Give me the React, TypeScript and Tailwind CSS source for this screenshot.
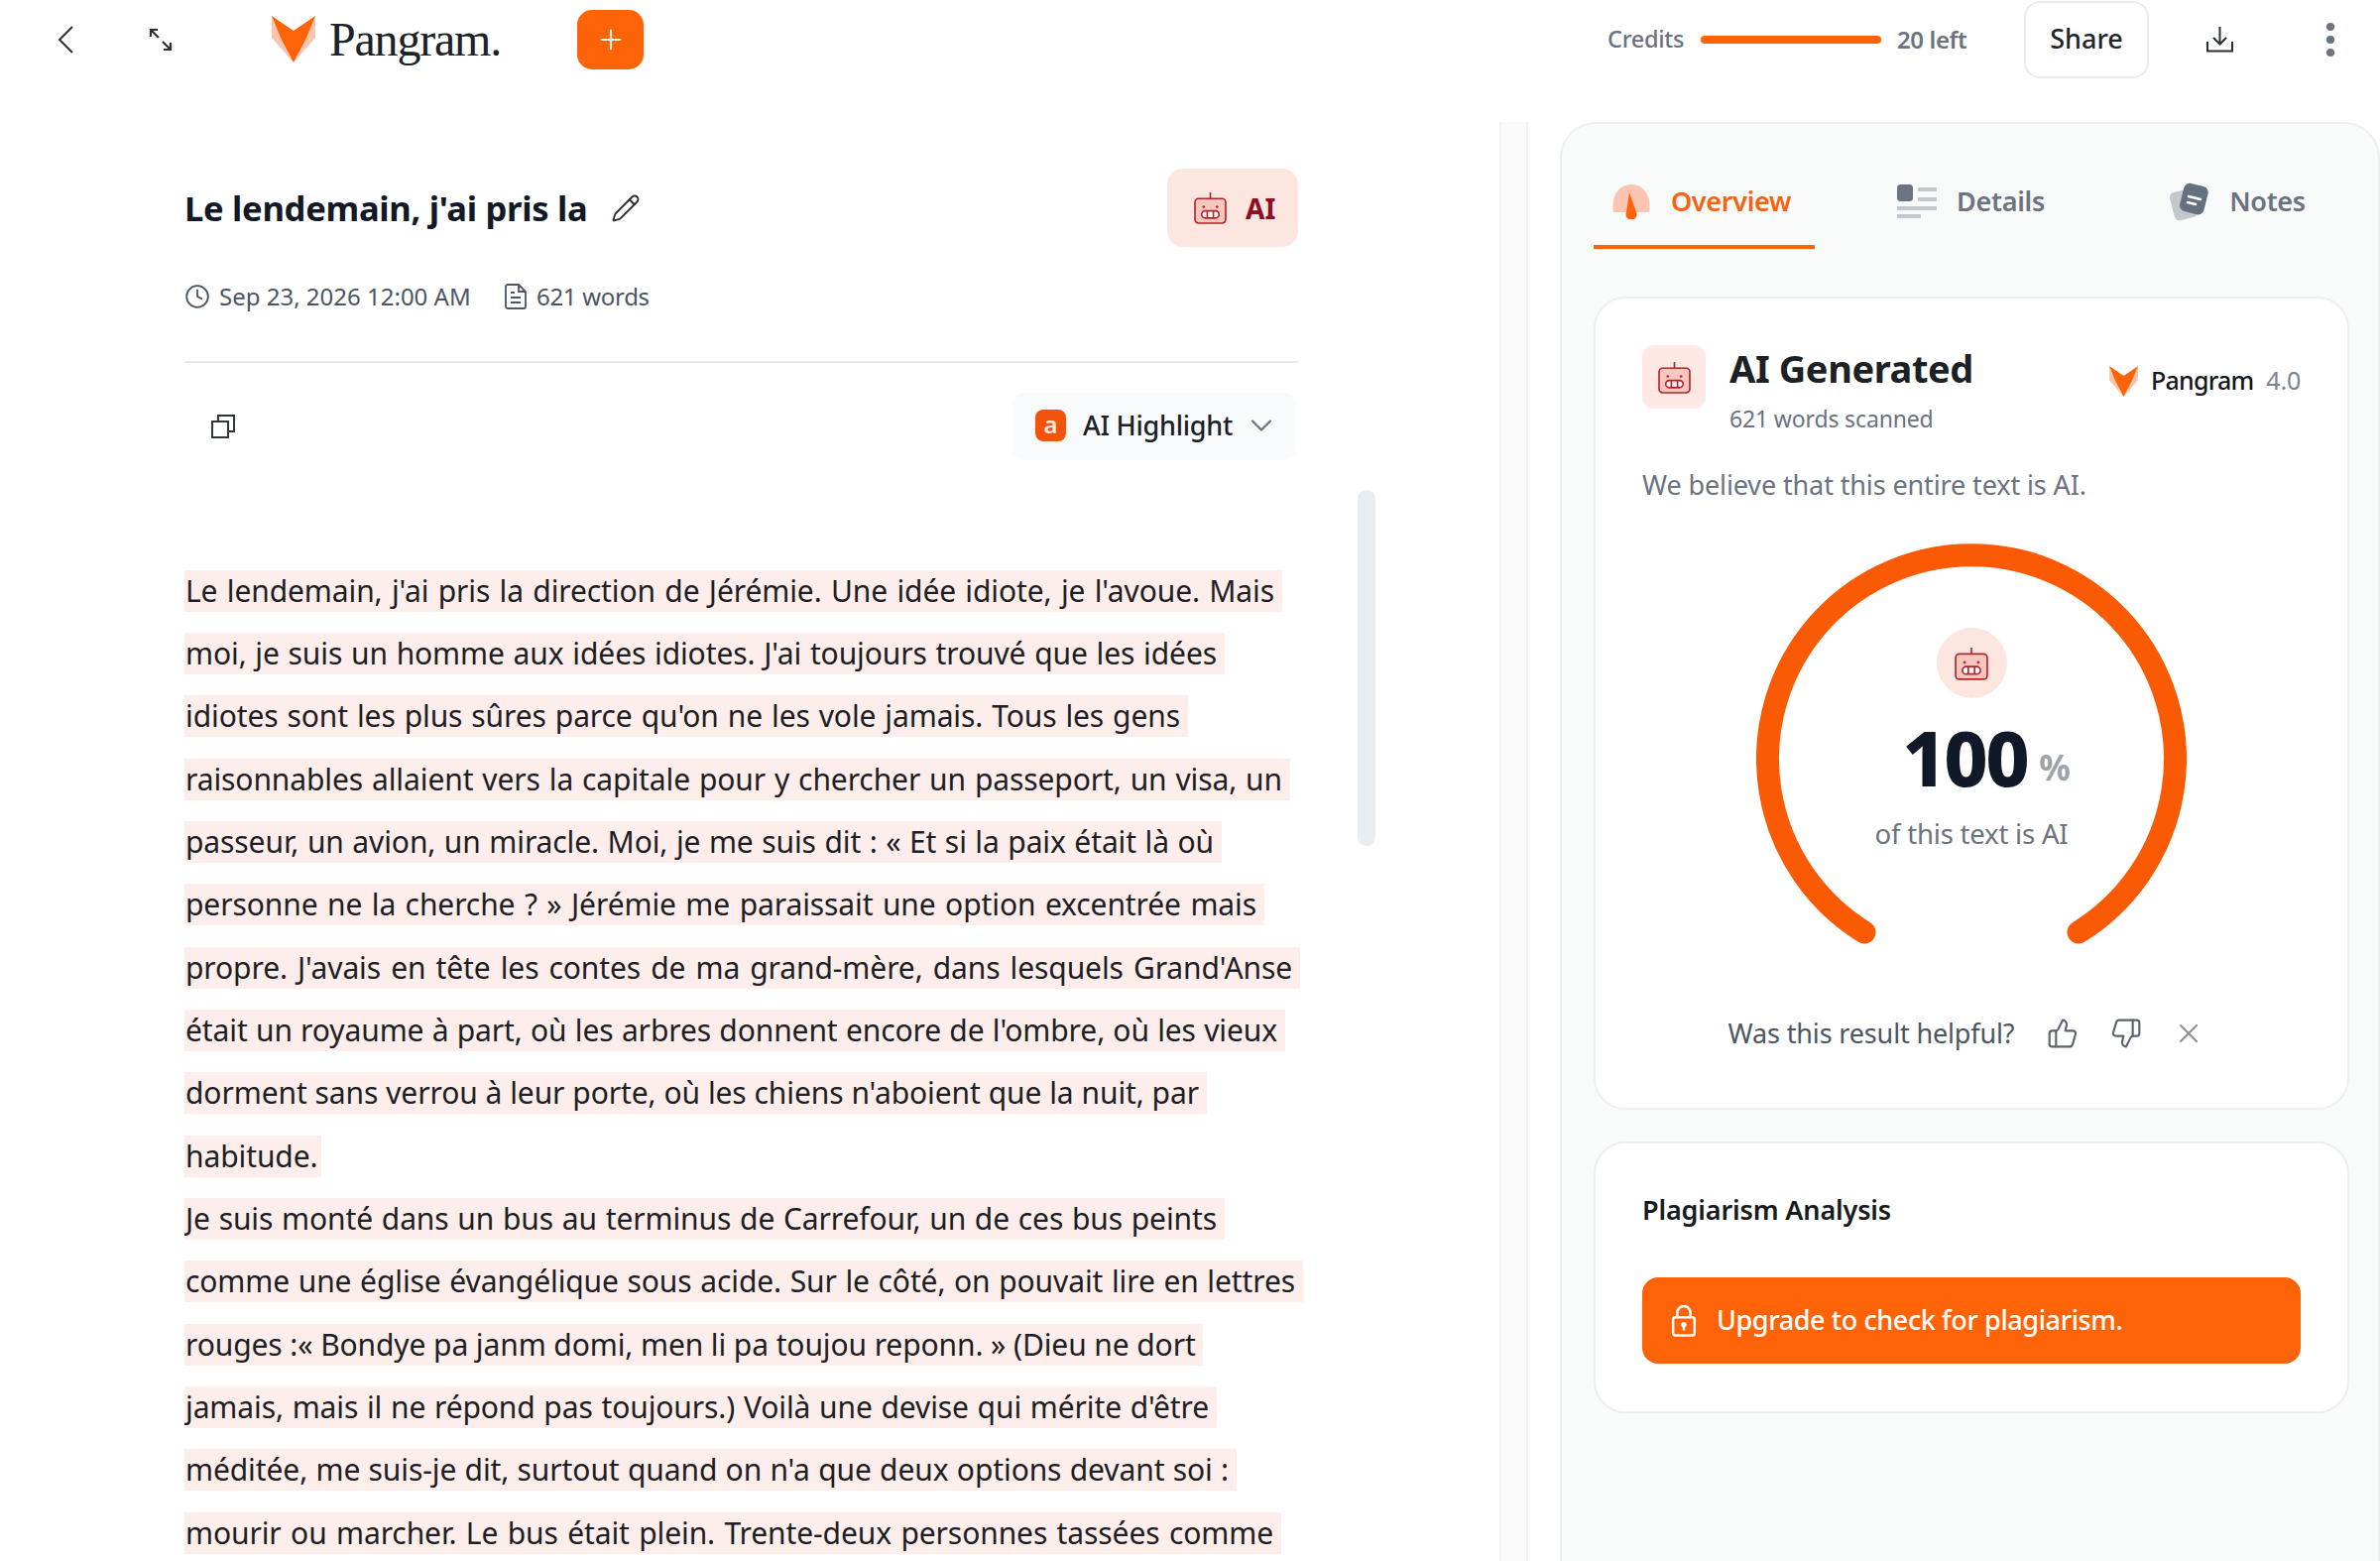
import React from "react";
import { Plus, Pencil, Clock, ChevronDown, ThumbsUp, ThumbsDown, X } from "lucide-react";

const LINES: [string, number][] = [
  ["Le lendemain, j'ai pris la direction de Jérémie. Une idée idiote, je l'avoue. Mais", 1107],
  ["moi, je suis un homme aux idées idiotes. J'ai toujours trouvé que les idées", 1049],
  ["idiotes sont les plus sûres parce qu'on ne les vole jamais. Tous les gens", 1012],
  ["raisonnables allaient vers la capitale pour y chercher un passeport, un visa, un", 1115],
  ["passeur, un avion, un miracle. Moi, je me suis dit : « Et si la paix était là où", 1046],
  ["personne ne la cherche ? » Jérémie me paraissait une option excentrée mais", 1089],
  ["propre. J'avais en tête les contes de ma grand-mère, dans lesquels Grand'Anse", 1125],
  ["était un royaume à part, où les arbres donnent encore de l'ombre, où les vieux", 1110],
  ["dorment sans verrou à leur porte, où les chiens n'aboient que la nuit, par", 1031],
  ["habitude.", 138],
  ["Je suis monté dans un bus au terminus de Carrefour, un de ces bus peints", 1049],
  ["comme une église évangélique sous acide. Sur le côté, on pouvait lire en lettres", 1128],
  ["rouges :« Bondye pa janm domi, men li pa toujou reponn. » (Dieu ne dort", 1027],
  ["jamais, mais il ne répond pas toujours.) Voilà une devise qui mérite d'être", 1041],
  ["méditée, me suis-je dit, surtout quand on n'a que deux options devant soi :", 1061],
  ["mourir ou marcher. Le bus était plein. Trente-deux personnes tassées comme", 1106],
];

function Fox({ className }: { className: string }) {
  return (
    <svg viewBox="0 0 44 47" className={className}>
      <polygon points="0,0 0,22 22,47 9,20" fill="#fcc5b2" />
      <polygon points="44,0 44,22 22,47 35,20" fill="#fcc5b2" />
      <polygon points="0,0 22,15 44,0 35,22 22,47 9,22" fill="#ff6308" />
    </svg>
  );
}

function Robot({ className }: { className: string }) {
  return (
    <svg viewBox="0 0 32 32" className={className} fill="none">
      <path d="M16 1v6" stroke="#b4232a" strokeWidth="1.6" />
      <rect x="1" y="7" width="30" height="24" rx="3.5" fill="#f9c7bd" stroke="#b4232a" strokeWidth="1.6" />
      <circle cx="9.5" cy="15" r="1.3" fill="#b4232a" />
      <circle cx="22.5" cy="15" r="1.3" fill="#b4232a" />
      <rect x="7.5" y="19" width="17" height="7" rx="3.5" fill="#fff" stroke="#b4232a" strokeWidth="1.6" />
      <path d="M13 19v7M19 19v7" stroke="#b4232a" strokeWidth="1.6" />
    </svg>
  );
}

export default function App() {
  return (
    <div className="w-[2400px] h-[1574px] overflow-hidden bg-white font-['Noto_Sans',sans-serif] text-[#1f2328]">
      <header className="h-[123px] flex items-start">
        <div className="h-[79px] w-full flex items-center">
          <svg viewBox="0 0 16 28" className="ml-[58px] w-[16px] h-[28px]" fill="none" stroke="#2b2f36" strokeWidth="2">
            <path d="M15 1L2 14l13 13" />
          </svg>
          <svg viewBox="0 0 24 24" className="ml-[76px] w-[24px] h-[24px] text-[#2b2f36]" fill="none" stroke="currentColor" strokeWidth="2.2">
            <path d="M2 9V2h7M2 2l8 8M22 15v7h-7M22 22l-8-8" />
          </svg>
          <Fox className="ml-[100px] w-[44px] h-[47px]" />
          <span className="ml-[14px] font-['Liberation_Serif',serif] text-[48px] leading-none tracking-[-1.2px] text-[#1c2226]">Pangram.</span>
          <div className="ml-[77px] w-[67px] h-[60px] rounded-[15px] bg-[#ff6308] flex items-center justify-center">
            <Plus className="w-[32px] h-[32px] text-white" strokeWidth={1.6} />
          </div>
          <span className="ml-[972px] w-[78px] text-[23.500px] tracking-[-0.3px] font-medium text-[#6b7280] whitespace-nowrap">Credits</span>
          <div className="ml-[16px] w-[182px] h-[8px] rounded-full bg-[#ff6308]" />
          <span className="ml-[16px] w-[71px] text-[24px] tracking-[-0.4px] font-semibold text-[#6b7280] whitespace-nowrap">20 left</span>
          <button className="ml-[57px] w-[126px] h-[78px] rounded-[16px] border-2 border-[#e9ebee] text-[27px] font-medium text-[#22262b]">Share</button>
          <svg viewBox="0 0 27 27" className="ml-[58px] w-[27px] h-[27px]" fill="none" stroke="#2b2f36" strokeWidth="2">
            <path d="M1 16v9.500h25V16M13.500 1v17M7 12l6.500 6.500L20 12" />
          </svg>
          <div className="ml-[94px] flex flex-col gap-[5px]">
            <span className="w-[8px] h-[8px] rounded-full bg-[#6b7280]" />
            <span className="w-[8px] h-[8px] rounded-full bg-[#6b7280]" />
            <span className="w-[8px] h-[8px] rounded-full bg-[#6b7280]" />
          </div>
        </div>
      </header>

      <div className="flex h-[1451px]">
        <main className="relative w-[1512px] pl-[186px] pt-[47px]">
          <div className="w-[1123px]">
            <div className="h-[79px] flex items-center">
              <h1 className="text-[34.600px] font-bold text-[#111827] tracking-[-0.3px] whitespace-nowrap">Le lendemain, j'ai pris la</h1>
              <Pencil className="ml-[24px] w-[30px] h-[30px] text-[#2b2f36]" strokeWidth={1.5} />
              <div className="ml-auto w-[132px] h-[79px] rounded-[16px] bg-[#fde5e0] flex items-center pl-[27px] gap-[19px]">
                <Robot className="w-[33px] h-[33px]" />
                <span className="text-[28px] font-bold text-[#8a0f24]">AI</span>
              </div>
            </div>
            <div className="mt-[37px] h-[26px] flex items-center text-[24px] text-[#4b5563] whitespace-nowrap">
              <Clock className="w-[26px] h-[26px]" strokeWidth={1.7} />
              <span className="ml-[9px] w-[288px]">Sep 23, 2026 12:00 AM</span>
              <svg viewBox="0 0 22 26" className="w-[22px] h-[26px]" fill="none" stroke="#4b5563" strokeWidth="1.8">
                <path d="M3 1h11l7 7v15a2 2 0 0 1-2 2H3a2 2 0 0 1-2-2V3a2 2 0 0 1 2-2zM14 1v7h7M6 9h4M6 14h10M6 19h10" />
              </svg>
              <span className="ml-[10px] tracking-[-0.3px]">621 words</span>
            </div>
            <div className="mt-[52px] h-[2px] bg-[#e7e9ec]" />
            <div className="mt-[30px] h-[68px] flex items-center">
              <svg viewBox="0 0 24 24" className="ml-[27px] w-[24px] h-[24px]" fill="none" stroke="#2b2f36" strokeWidth="1.9">
                <path d="M7 7V1h16v16h-6" />
                <rect x="1" y="7" width="16" height="16" />
              </svg>
              <div className="ml-auto mr-[2px] w-[286px] h-[68px] rounded-[12px] bg-[#f9fafb] flex items-center pl-[23px] pb-[2px]">
                <div className="w-[31px] h-[32px] rounded-[8px] bg-[#f4530a] flex items-center justify-center text-[24px] font-semibold leading-none text-[#ffe9dd] pb-[3px]">a</div>
                <span className="ml-[17px] text-[27px] font-medium tracking-[-0.25px] text-[#1b2126] whitespace-nowrap">AI Highlight</span>
                <ChevronDown className="ml-[11px] w-[36px] h-[36px] text-[#6b7280]" strokeWidth={1.5} />
              </div>
            </div>
          </div>
          <div className="absolute left-[1369px] top-[371px] w-[18px] h-[359px] rounded-full bg-[#e8edf2]" />
          <div className="mt-[100px] text-[30px] tracking-[-0.1px] text-[#1c2024]">
            {LINES.map(([text, width]) => (
              <div key={text} className="h-[63.350px] flex items-center">
                <div
                  className="h-[42px] leading-[42px] bg-[#feeeeb] pl-[1px] pr-[8px] whitespace-nowrap overflow-hidden [text-align-last:justify] [white-space-collapse:collapse] [text-wrap:nowrap]"
                  style={{ width }}
                >
                  {text}
                </div>
              </div>
            ))}
          </div>
        </main>

        <div className="w-[29px] h-full bg-[#fafafa] border-x-2 border-[#f0f1f2]" />

        <aside className="ml-[32px] w-[827px] h-[1480px] shrink-0 rounded-t-[36px] border-2 border-[#eeeff1] bg-[#f9fafa] pl-[32px]">
          <nav className="h-[126px] flex gap-[46px]">
            <div className="w-[223px] h-[126px] flex items-center justify-center gap-[20px] border-b-4 border-[#ff6308] pt-[46px] pb-[12px] pr-[6px]">
              <svg viewBox="0 0 40 36" className="w-[40px] h-[36px]">
                <path d="M2 29C-1 12 8 1 20 1s21 11 18 28z" fill="#fcc5b2" />
                <path d="M18 9l7 20a5.500 5.500 0 1 1-10 0z" fill="#ff6308" />
              </svg>
              <span className="text-[27px] font-semibold text-[#f4640e] tracking-[-0.3px]">Overview</span>
            </div>
            <div className="w-[223px] h-[126px] flex items-center justify-center gap-[20px] pt-[44px] pb-[14px]">
              <svg viewBox="0 0 40 34" className="w-[40px] h-[34px]">
                <rect x="0" y="0" width="16" height="17" rx="3.500" fill="#6b7480" />
                <rect x="21" y="3" width="19" height="4" fill="#c3c7cb" />
                <rect x="21" y="13" width="19" height="4" fill="#c3c7cb" />
                <rect x="0" y="22" width="40" height="4" fill="#c3c7cb" />
                <rect x="0" y="30" width="24" height="4" fill="#c3c7cb" />
              </svg>
              <span className="text-[27px] font-semibold text-[#6b7280] tracking-[-0.3px]">Details</span>
            </div>
            <div className="w-[223px] h-[126px] flex items-center justify-center gap-[20px] pt-[44px] pb-[14px]">
              <svg viewBox="0 0 40 40" className="w-[40px] h-[40px]">
                <rect x="2" y="9" width="24" height="29" rx="5" transform="rotate(-14 14 23)" fill="#c3c8cd" />
                <rect x="12" y="3" width="25" height="29" rx="6" transform="rotate(14 24 17)" fill="#667180" />
                <path d="M19 15l12 3M18 21l8 2" stroke="#fff" strokeWidth="2.600" strokeLinecap="round" />
              </svg>
              <span className="text-[27px] font-semibold text-[#6b7280] tracking-[-0.3px]">Notes</span>
            </div>
          </nav>

          <section className="mt-[48px] w-[762px] h-[820px] rounded-[32px] border-2 border-[#eeeff1] bg-white px-[47px] pt-[47px]">
            <div className="flex h-[100px]">
              <div className="w-[64px] h-[64px] rounded-[12px] bg-[#fde8e3] flex items-center justify-center">
                <Robot className="w-[33px] h-[33px]" />
              </div>
              <div className="ml-[24px]">
                <div className="text-[38px] leading-[47px] font-bold text-[#1b2126] tracking-[-0.4px] whitespace-nowrap">AI Generated</div>
                <div className="mt-[12px] text-[23px] leading-[30px] tracking-[-0.15px] text-[#6b7280] whitespace-nowrap">621 words scanned</div>
              </div>
              <div className="ml-auto mt-[19px] h-[34px] flex items-center">
                <Fox className="w-[29px] h-[31px]" />
                <span className="ml-[13px] text-[25px] font-medium tracking-[-0.8px] text-[#14181c]">Pangram</span>
                <span className="ml-[13px] text-[25px] tracking-[-0.2px] text-[#7b8390]">4.0</span>
              </div>
            </div>
            <p className="mt-[19px] text-[27px] leading-[44px] tracking-[-0.12px] text-[#6b7280] whitespace-nowrap">We believe that this entire text is AI.</p>
            <div className="relative mt-[37px] mx-auto w-[434px] h-[410px]">
              <svg viewBox="0 0 434 410" className="w-[434px] h-[410px]" fill="none">
                <path d="M109 392A205.500 205.500 0 1 1 325 392" stroke="#fb5a05" strokeWidth="23" strokeLinecap="round" />
              </svg>
              <div className="absolute inset-x-0 top-[85px] flex flex-col items-center">
                <div className="w-[71px] h-[71px] rounded-full bg-[#fde6df] flex items-center justify-center">
                  <Robot className="w-[34px] h-[34px]" />
                </div>
                <div className="mt-[10px] h-[100px] flex items-baseline pl-[30px]">
                  <span className="text-[77px] leading-[100px] font-extrabold text-[#111827] tracking-[-2.5px]">100</span>
                  <span className="ml-[12px] -translate-y-[6px] text-[35px] font-bold text-[#9ea3a9]">%</span>
                </div>
                <div className="mt-[9px] text-[27.500px] leading-[36px] tracking-[-0.2px] text-[#6b7280] whitespace-nowrap">of this text is AI</div>
              </div>
            </div>
            <div className="mt-[64px] h-[40px] flex items-center justify-center text-[#4b5563] pr-[10px]">
              <span className="text-[27px] tracking-[-0.15px] whitespace-nowrap">Was this result helpful?</span>
              <ThumbsUp className="ml-[33px] w-[32px] h-[32px] text-[#5b6370]" strokeWidth={1.6} />
              <ThumbsDown className="ml-[32px] w-[32px] h-[32px] text-[#5b6370]" strokeWidth={1.6} />
              <X className="ml-[31px] w-[32px] h-[32px] text-[#8b919a]" strokeWidth={1.6} />
            </div>
          </section>

          <section className="mt-[32px] w-[762px] h-[274px] rounded-[32px] border-2 border-[#eeeff1] bg-white px-[47px] pt-[47px]">
            <h2 className="text-[27px] leading-[40px] font-semibold tracking-[-0.15px] text-[#171b20] whitespace-nowrap">Plagiarism Analysis</h2>
            <button className="mt-[48px] w-[664px] h-[87px] rounded-[16px] bg-[#ff6308] flex items-center pl-[29px] text-white">
              <svg viewBox="0 0 26 34" className="w-[26px] h-[32px]" fill="none" stroke="currentColor" strokeWidth="2.600">
                <rect x="1.500" y="13" width="23" height="19.500" rx="2.500" />
                <path d="M6 13V8a7 7 0 0 1 14 0v5M13 21v6" />
                <circle cx="13" cy="21" r="1.600" fill="currentColor" />
              </svg>
              <span className="ml-[20px] text-[27px] font-medium tracking-[-0.4px] whitespace-nowrap">Upgrade to check for plagiarism.</span>
            </button>
          </section>
        </aside>
      </div>
    </div>
  );
}
